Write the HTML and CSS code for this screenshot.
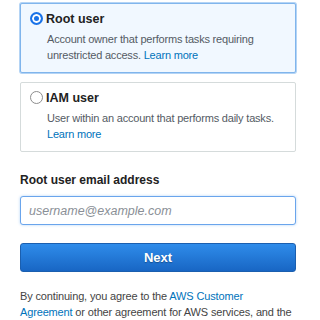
FILE: index.html
```html
<!DOCTYPE html>
<html lang="en">
<head>
<meta charset="UTF-8">
<meta name="viewport" content="width=device-width, initial-scale=1.0">
<title>Sign in</title>
<link rel="stylesheet" href="styles.css">
</head>
<body>
<div class="signin">
  <div class="choices">
    <label class="choice selected">
      <span class="choice-head"><span class="radio checked"></span>Root user</span>
      <span class="choice-desc">Account owner that performs tasks requiring unrestricted access. <a href="#">Learn more</a></span>
    </label>
    <label class="choice">
      <span class="choice-head"><span class="radio"></span>IAM user</span>
      <span class="choice-desc">User within an account that performs daily tasks. <a href="#">Learn more</a></span>
    </label>
  </div>

  <div class="field">
    <div class="field-label">Root user email address</div>
    <input class="field-input" type="text" placeholder="username@example.com">
  </div>

  <button class="next-btn">Next</button>

  <p class="legal">By continuing, you agree to the <a href="#">AWS Customer Agreement</a> or other agreement for AWS services, and the Privacy Notice.</p>
</div>
</body>
</html>
```

FILE: styles.css
```css
body {
  margin: 0;
  background: #fff;
  color: #444;
  font-family: "Liberation Sans", Arial, sans-serif;
  overflow: hidden;
}

a {
  color: #0073bb;
  text-decoration: none;
}

.signin {
  width: 276px;
  padding: 3px 0 0 20px;
}

.choices {
  display: flex;
  flex-direction: column;
  gap: 9px;
}

.choice {
  display: flex;
  flex-direction: column;
  border: 1px solid #d5dbdb;
  border-radius: 2px;
  padding: 8px 10px 9px 9px;
}

.choice.selected {
  background: #f1f8ff;
  border-color: #80b5ec;
  box-shadow: 0 0 0 1px #b4d4f5;
}

.choice-head {
  display: flex;
  align-items: center;
  gap: 3px;
  font-size: 12.5px;
  font-weight: bold;
  color: #222;
  line-height: 15px;
}

.radio {
  box-sizing: border-box;
  width: 13px;
  height: 13px;
  border: 1px solid #8d8d8d;
  border-radius: 50%;
  background: #fff;
  flex: none;
  margin-top: -2px;
}

.radio.checked {
  border: 2px solid #1a73e8;
  background: #1a73e8;
  box-shadow: inset 0 0 0 2px #fff;
}

.choice-desc {
  font-size: 11px;
  letter-spacing: -0.2px;
  line-height: 16px;
  color: #545b64;
  padding-left: 17px;
  margin-top: 4px;
}

.field {
  margin-top: 20px;
}

.field-label {
  font-size: 12px;
  font-weight: bold;
  color: #222;
  line-height: 16px;
  margin-bottom: 8px;
}

.field-input {
  box-sizing: border-box;
  display: block;
  width: 100%;
  height: 29px;
  border: 1px solid #6aa5ec;
  border-radius: 3px;
  box-shadow: 0 0 3px #b3d3f7;
  padding: 0 8px;
  font-family: inherit;
  font-size: 12.5px;
  color: #222;
  outline: none;
}

.field-input::placeholder {
  color: #8a8f96;
  font-style: italic;
}

.next-btn {
  display: block;
  width: 100%;
  height: 29px;
  margin-top: 18px;
  border: 1px solid #1b5faf;
  border-radius: 3px;
  background: linear-gradient(#2f8cea, #1866c4);
  color: #fff;
  font-family: inherit;
  font-size: 13px;
  font-weight: bold;
  text-shadow: 0 1px 1px rgba(0, 0, 0, 0.3);
}

.legal {
  margin: 16px 0 0;
  font-size: 11px;
  letter-spacing: -0.15px;
  line-height: 16px;
  color: #444;
}
```
